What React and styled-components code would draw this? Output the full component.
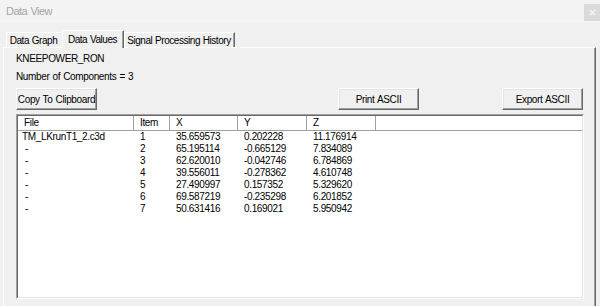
import React from "react";
import styled, { createGlobalStyle } from "styled-components";

const Global = createGlobalStyle`
  html, body { margin: 0; padding: 0; background: #f0f0f0; }
  body { width: 600px; height: 306px; overflow: hidden; }
  * { box-sizing: border-box; }
`;

const FONT = `"Liberation Sans", Arial, sans-serif`;

const Window = styled.div`
  width: 600px;
  height: 306px;
  display: flex;
  flex-direction: column;
  font-family: ${FONT};
  font-size: 10px;
  letter-spacing: -0.35px;
  word-spacing: 0.6px;
  color: #000;
  background: #f0f0f0;
  overflow: hidden;
`;

const TitleBar = styled.div`
  height: 23px;
  flex: none;
  display: flex;
  align-items: flex-start;
  justify-content: space-between;
  background: #f3f3f3;
`;

const Title = styled.div`
  font-size: 11px;
  letter-spacing: -0.5px;
  color: #a3a3a3;
  line-height: 14px;
  padding: 4px 0 0 6px;
`;

const CloseButton = styled.div`
  width: 16px;
  height: 17px;
  margin-top: 4px;
  background: #dadada;
  display: flex;
  align-items: center;
  justify-content: center;
`;

const Body = styled.div`
  flex: 1;
  display: flex;
  flex-direction: column;
  padding: 7px 4px 0 3px;
`;

const TabStrip = styled.div`
  height: 17px;
  display: flex;
  align-items: flex-end;
  padding-left: 3px;
  position: relative;
  z-index: 1;
`;

const Tab = styled.div`
  width: ${(p) => p.$w}px;
  height: ${(p) => (p.$active ? 18 : 15)}px;
  margin-bottom: ${(p) => (p.$active ? -1 : 0)}px;
  display: flex;
  align-items: center;
  justify-content: center;
  padding-bottom: ${(p) => (p.$active ? 1 : 0)}px;
  padding-right: 1px;
  white-space: nowrap;
  letter-spacing: -0.45px;
  word-spacing: 0.4px;
  background: #f0f0f0;
  border-top: 1px solid #fff;
  border-left: 1px solid #fff;
  border-right: 1px solid ${(p) => (p.$edge ? "#696969" : "transparent")};
  box-shadow: ${(p) => (p.$edge ? "inset -1px 0 0 #a0a0a0" : "none")};
`;

const Panel = styled.div`
  flex: 1;
  display: flex;
  flex-direction: column;
  border-top: 1px solid #fff;
  border-left: 1px solid #fff;
  border-right: 1px solid #696969;
  box-shadow: inset -1px 0 0 #a0a0a0;
  padding: 4px 11px 0 12px;
`;

const Label = styled.div`
  line-height: 13px;
  height: 13px;
  margin-bottom: 5px;
  white-space: nowrap;
`;

const ButtonRow = styled.div`
  display: flex;
  height: 22px;
  margin-bottom: 4px;
  padding-right: 1px;
`;

const Button = styled.div`
  width: 81px;
  height: 22px;
  display: flex;
  align-items: center;
  justify-content: center;
  white-space: nowrap;
  background: #f0f0f0;
  border-top: 1px solid #fff;
  border-left: 1px solid #fff;
  border-right: 1px solid #696969;
  border-bottom: 1px solid #696969;
  box-shadow: inset -1px -1px 0 #a0a0a0, inset 1px 1px 0 #e3e3e3;
  margin-left: ${(p) => p.$ml || "0"};
`;

const ListFrame = styled.div`
  height: 185px;
  border-top: 1px solid #a0a0a0;
  border-left: 1px solid #a0a0a0;
  border-right: 1px solid #fff;
  border-bottom: 1px solid #fff;
`;

const ListInner = styled.div`
  height: 100%;
  background: #fff;
  border-top: 1px solid #696969;
  border-left: 1px solid #696969;
  border-right: 1px solid #e3e3e3;
  border-bottom: 1px solid #e3e3e3;
  overflow: hidden;
`;

const COLS = "116px 36px 68px 69px 69px 1fr";

const HeaderRow = styled.div`
  display: grid;
  grid-template-columns: ${COLS};
  height: 15px;
  border-bottom: 1px solid #a0a0a0;
  background: #fff;
`;

const HeaderCell = styled.div`
  line-height: 14px;
  padding-left: 6px;
  border-right: ${(p) => (p.$filler ? "none" : "1px solid #a0a0a0")};
  white-space: nowrap;
`;

const DataRow = styled.div`
  display: grid;
  grid-template-columns: ${COLS};
  height: 12px;
`;

const Cell = styled.div`
  line-height: 12px;
  padding-left: ${(p) => (p.$first ? 4 : 6)}px;
  white-space: nowrap;
`;

const rows = [
  ["TM_LKrunT1_2.c3d", "1", "35.659573", "0.202228", "11.176914"],
  ["\u00a0-", "2", "65.195114", "-0.665129", "7.834089"],
  ["\u00a0-", "3", "62.620010", "-0.042746", "6.784869"],
  ["\u00a0-", "4", "39.556011", "-0.278362", "4.610748"],
  ["\u00a0-", "5", "27.490997", "0.157352", "5.329620"],
  ["\u00a0-", "6", "69.587219", "-0.235298", "6.201852"],
  ["\u00a0-", "7", "50.631416", "0.169021", "5.950942"],
];

export default function App() {
  return (
    <>
      <Global />
      <Window>
        <TitleBar>
          <Title>Data View</Title>
          <CloseButton>
            <svg width="7" height="7" viewBox="0 0 7 7">
              <path d="M1 1L6 6M6 1L1 6" stroke="#f4f4f4" strokeWidth="1.6" />
            </svg>
          </CloseButton>
        </TitleBar>
        <Body>
          <TabStrip>
            <Tab $w={56}>Data Graph</Tab>
            <Tab $w={62} $active $edge>Data Values</Tab>
            <Tab $w={111} $edge>Signal Processing History</Tab>
          </TabStrip>
          <Panel>
            <Label>KNEEPOWER_RON</Label>
            <Label>Number of Components = 3</Label>
            <ButtonRow>
              <Button>Copy To Clipboard</Button>
              <Button $ml="auto">Print ASCII</Button>
              <Button $ml="83px">Export ASCII</Button>
            </ButtonRow>
            <ListFrame>
              <ListInner>
                <HeaderRow>
                  <HeaderCell>File</HeaderCell>
                  <HeaderCell>Item</HeaderCell>
                  <HeaderCell>X</HeaderCell>
                  <HeaderCell>Y</HeaderCell>
                  <HeaderCell>Z</HeaderCell>
                  <HeaderCell $filler />
                </HeaderRow>
                {rows.map((r, i) => (
                  <DataRow key={i}>
                    {r.map((c, j) => (
                      <Cell key={j} $first={j === 0}>{c}</Cell>
                    ))}
                    <Cell />
                  </DataRow>
                ))}
              </ListInner>
            </ListFrame>
          </Panel>
        </Body>
      </Window>
    </>
  );
}
